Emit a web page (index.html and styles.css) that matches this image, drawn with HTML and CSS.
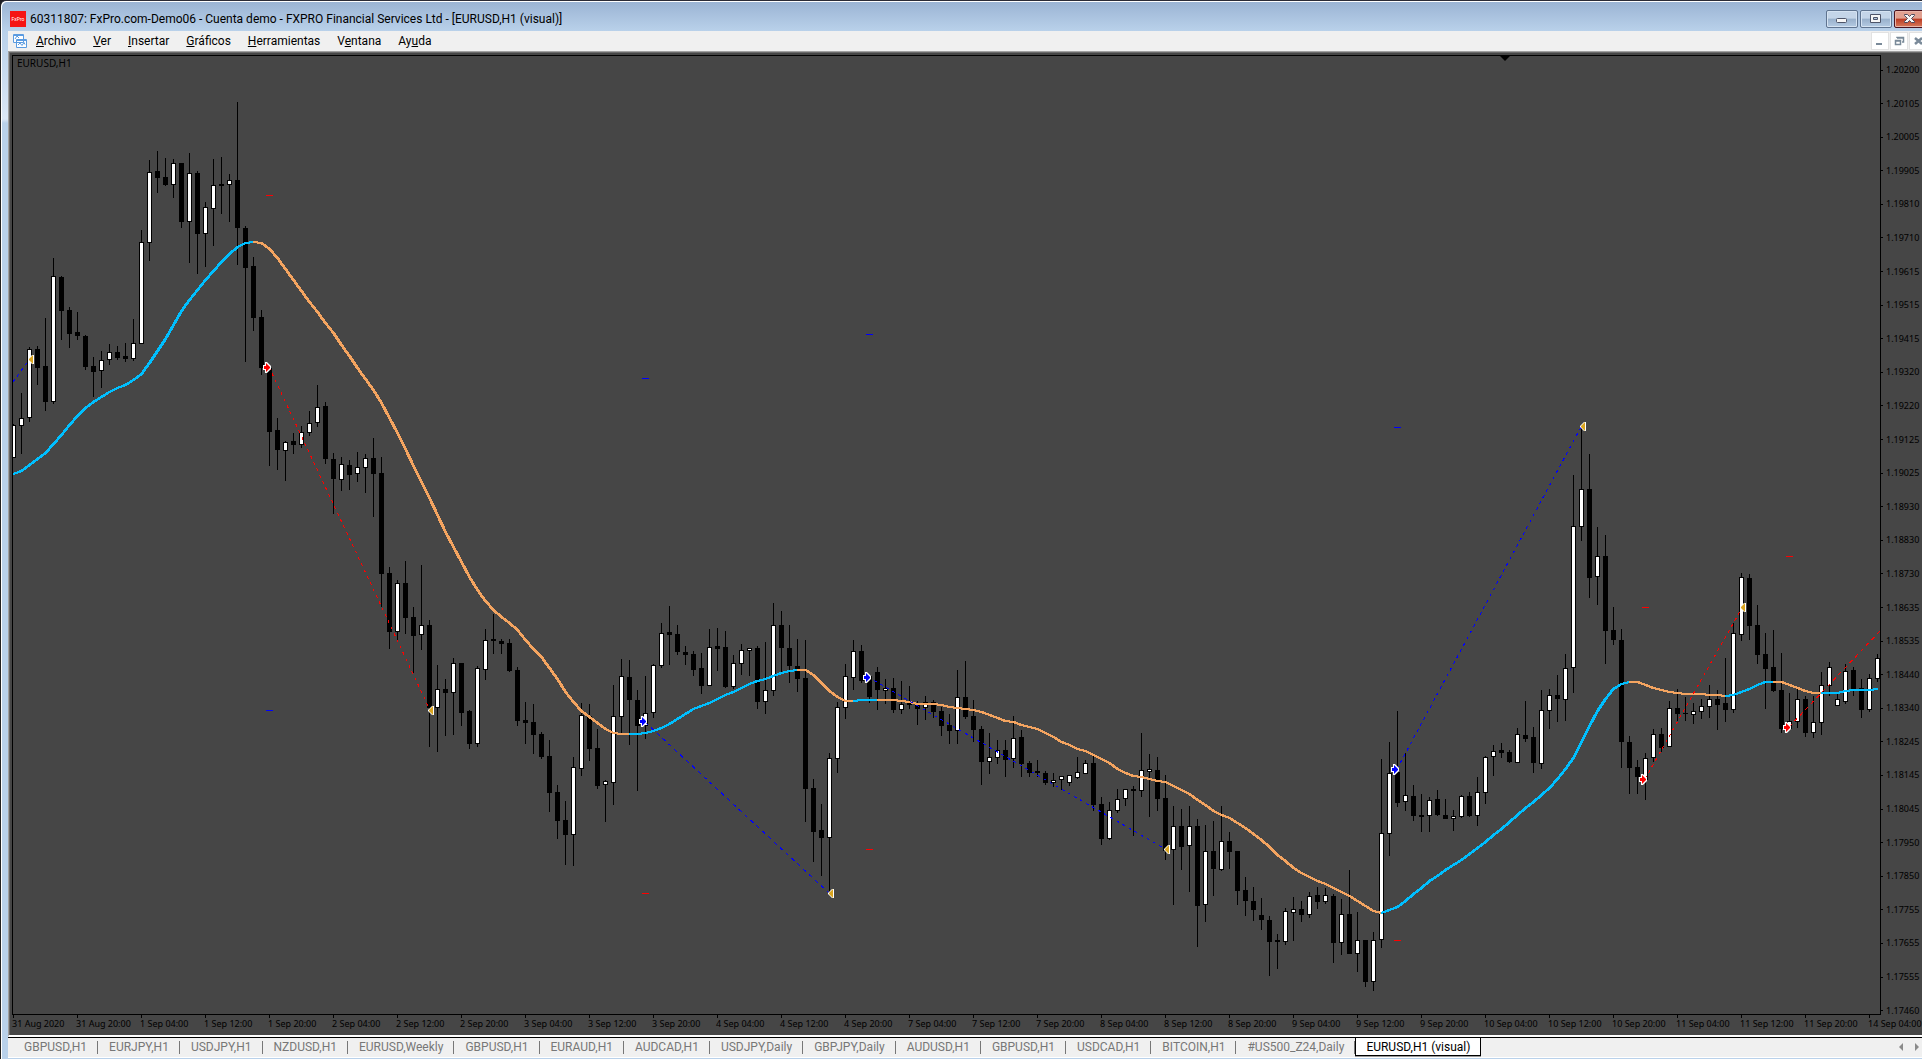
FILE: index.html
```html
<!DOCTYPE html>
<html lang="es">
<head>
<meta charset="utf-8">
<title>60311807: FxPro.com-Demo06 - Cuenta demo</title>
<link rel="stylesheet" href="styles.css">
</head>
<body>
<div class="window">
  <header class="titlebar">
    <span class="brand">FxPro</span>
    <h1 class="title">60311807: FxPro.com-Demo06 - Cuenta demo - FXPRO Financial Services Ltd - [EURUSD,H1 (visual)]</h1>
    <div class="caption">
      <button class="cap" aria-label="Minimizar">
        <svg width="30" height="16" viewBox="0 0 30 16"><rect x="9.500" y="7.500" width="10" height="4" rx="1" fill="#f6f6f6" stroke="#4d5468"/></svg>
      </button>
      <button class="cap" aria-label="Maximizar">
        <svg width="30" height="16" viewBox="0 0 30 16"><path fill-rule="evenodd" d="M9.500 3.500h10v8h-10zM12.500 6.500h4v2h-4z" fill="#f6f6f6" stroke="#4d5468"/></svg>
      </button>
      <button class="cap cap-close" aria-label="Cerrar">
        <svg width="30" height="16" viewBox="0 0 30 16"><path d="M9.500 3.500h3l2 2 2-2h3v1l-3 3 3 3v1h-3l-2-2-2 2h-3v-1l3-3-3-3z" fill="#f6f6f6" stroke="#4d4a5c"/></svg>
      </button>
    </div>
  </header>

  <div class="client">
    <nav class="menubar" aria-label="Menú">
      <svg class="mdi-icon" width="16" height="16" viewBox="0 0 16 16">
        <path d="M1.500 1.500h10v8h-10zM4.500 6.500h10v8h-10z" fill="#fff" stroke="#5b9be0"/>
        <path d="M2 2.500h9M5 7.500h9" stroke="#5b9be0"/>
        <path d="M3 6l2-3 2 2M6 12l2-2 2 2.500 2-3 1 2" fill="none" stroke="#5b9be0"/>
      </svg>
      <button class="menu"><u>A</u>rchivo</button>
      <button class="menu"><u>V</u>er</button>
      <button class="menu"><u>I</u>nsertar</button>
      <button class="menu"><u>G</u>ráficos</button>
      <button class="menu"><u>H</u>erramientas</button>
      <button class="menu">V<u>e</u>ntana</button>
      <button class="menu">Ay<u>u</u>da</button>
      <div class="mdi">
        <button class="mdi-btn" aria-label="Minimizar gráfico"><svg width="16" height="16" viewBox="0 0 16 16"><path d="M4 11h6" stroke="#7a8a99" stroke-width="2"/></svg></button>
        <button class="mdi-btn" aria-label="Restaurar gráfico"><svg width="16" height="16" viewBox="0 0 16 16"><path d="M6 5V4.500h6.500V9H11M6 5h6" fill="none" stroke="#7a8a99" stroke-width="1.500"/><path d="M4.500 7.500h5v4h-5zM4 8h6" fill="none" stroke="#7a8a99" stroke-width="1.500"/></svg></button>
        <button class="mdi-btn" aria-label="Cerrar gráfico"><svg width="16" height="16" viewBox="0 0 16 16"><path d="M5 5l7 6M12 5l-7 6" stroke="#7a8a99" stroke-width="2.500"/></svg></button>
      </div>
    </nav>

    <main class="chart">
      <div class="plot">
        <span class="symbol">EURUSD,H1</span>
        <svg id="plot" class="canvas" viewBox="13 56 1867 958" preserveAspectRatio="none" role="img" aria-label="EURUSD,H1"></svg>
      </div>
      <ol class="prices" id="prices"></ol>
      <ol class="times" id="times"></ol>
    </main>

    <nav class="tabs" aria-label="Gráficos abiertos">
      <button class="tab">GBPUSD,H1</button>
      <button class="tab">EURJPY,H1</button>
      <button class="tab">USDJPY,H1</button>
      <button class="tab">NZDUSD,H1</button>
      <button class="tab">EURUSD,Weekly</button>
      <button class="tab">GBPUSD,H1</button>
      <button class="tab">EURAUD,H1</button>
      <button class="tab">AUDCAD,H1</button>
      <button class="tab">USDJPY,Daily</button>
      <button class="tab">GBPJPY,Daily</button>
      <button class="tab">AUDUSD,H1</button>
      <button class="tab">GBPUSD,H1</button>
      <button class="tab">USDCAD,H1</button>
      <button class="tab">BITCOIN,H1</button>
      <button class="tab">#US500_Z24,Daily</button>
      <button class="tab tab-active">EURUSD,H1 (visual)</button>
      <div class="scroll">
        <button class="scroll-btn" aria-label="Anterior"><svg width="4" height="8" viewBox="0 0 4 8"><path d="M4 0v8L0 4z" fill="#8a8a8a"/></svg></button>
        <button class="scroll-btn" aria-label="Siguiente"><svg width="4" height="8" viewBox="0 0 4 8"><path d="M0 0v8l4-4z" fill="#8a8a8a"/></svg></button>
      </div>
    </nav>
  </div>
</div>
<script src="chart.js"></script>
</body>
</html>
```
FILE: styles.css
```css
* { box-sizing: border-box; }

html, body { height: 100%; margin: 0; }

body {
  overflow: hidden;
  background: #1c1c22;
  color: #000;
  font-family: Roboto, "Noto Sans", sans-serif;
  font-size: 12px;
}

button {
  margin: 0;
  padding: 0;
  border: 0;
  background: none;
  color: inherit;
  font: inherit;
}

svg { display: block; }

.window {
  display: flex;
  flex-direction: column;
  height: 100%;
  padding: 1px 0 1px 7px;
  border-left: 1px solid #222;
  border-top: 1px solid #2b2b36;
  border-top-left-radius: 6px;
  background: linear-gradient(#9ab3d3, #b9d1ea 30px, #dbe7f5 118px, #b9d1ea 122px);
  box-shadow: inset 1px 1px #fff;
}

.titlebar {
  display: flex;
  align-items: center;
  flex: 0 0 29px;
  padding: 5px 0 0 2px;
}

.brand {
  flex: none;
  width: 16px;
  height: 16px;
  background: #f51414;
  color: #fff;
  font-size: 5px;
  line-height: 16px;
  text-align: center;
}

.title {
  flex: 1;
  margin: 0 0 0 4px;
  font-size: 12px;
  font-weight: 400;
  line-height: 16px;
  white-space: nowrap;
}

.caption {
  display: flex;
  gap: 2px;
  margin-right: -4px;
}

.cap {
  width: 32px;
  height: 18px;
  border: 1px solid #5f7490;
  border-radius: 2px;
  background: linear-gradient(#c4d5e8 45%, #98b0cb 50%, #b4cbe3);
  box-shadow: inset 0 0 0 1px #d5e3f2;
}

.cap-close {
  border-color: #4a1420;
  background: linear-gradient(#e0a090 45%, #bb3a22 50%, #d67a5c);
  box-shadow: inset 0 0 0 1px #e8b4a8;
}

.client {
  display: flex;
  flex: 1;
  flex-direction: column;
  min-height: 0;
  background: #f0f0f0;
}

.menubar {
  display: flex;
  align-items: center;
  flex: 0 0 20px;
  gap: 17px;
  padding-left: 4px;
  line-height: 16px;
}

.mdi-icon { flex: none; margin-right: -9px; }

.mdi {
  display: flex;
  gap: 1px;
  margin: 0 -5px 0 auto;
}

.mdi-btn {
  width: 18px;
  height: 18px;
  border: 1px solid #e2e2e2;
  background: #fff;
}

.chart {
  display: grid;
  flex: 1;
  grid-template: minmax(0, 1fr) 20px / minmax(0, 1fr) 41px;
  min-height: 0;
  padding: 3px 0 0 2px;
  border-top: 1px solid #a0a0a0;
  border-left: 1px solid #a0a0a0;
  border-bottom: 2px solid #fff;
  background: #464646;
  box-shadow: inset 1px 1px #696969;
  color: #000;
  font-family: "Noto Sans", sans-serif;
  font-size: 9px;
}

.plot {
  position: relative;
  margin-left: 1px;
  border: 1px solid #000;
}

.canvas { width: 100%; height: 100%; }

.symbol {
  position: absolute;
  top: 1px;
  left: 4px;
  font-size: 10px;
  line-height: 12px;
}

.prices {
  display: flex;
  flex-direction: column;
  justify-content: space-between;
  margin: 8px 0 -3px;
  padding: 0;
  list-style: none;
}

.prices li {
  display: flex;
  align-items: center;
  height: 14px;
  line-height: 14px;
}

.prices li::before {
  width: 2px;
  height: 1px;
  margin-right: 3px;
  background: #000;
  content: "";
}

.times {
  display: flex;
  grid-column: 1 / -1;
  margin: 0;
  padding: 0 0 0 1px;
  overflow: hidden;
  list-style: none;
}

.times li {
  flex: 0 0 64px;
  line-height: 12px;
  white-space: nowrap;
}

.times li::before {
  display: block;
  width: 1px;
  height: 3px;
  margin-left: 1px;
  background: #000;
  content: "";
}

.tabs {
  display: flex;
  align-items: flex-start;
  flex: 0 0 21px;
  padding-left: 5px;
  border-top: 1px solid #000;
  border-bottom: 1px solid #fff;
  color: #777;
}

.tab {
  position: relative;
  height: 18px;
  padding: 0 11px;
  line-height: 18px;
  white-space: nowrap;
}

.tab:not(.tab-active)::after {
  position: absolute;
  top: 3px;
  right: 0;
  width: 1px;
  height: 13px;
  background: #777;
  content: "";
}

.tab-active {
  padding: 0 10px;
  border: 1px solid #000;
  border-top: 0;
  background: #fff;
  box-shadow: 0 1px #999;
  color: #000;
}

.scroll {
  display: flex;
  gap: 12px;
  margin: 5px 3px 0 auto;
}
```
FILE: chart.js
```js
// Candle rows: high, body top, body bottom, low, 1 = rising, moving average.
// Each block has its own origin (canvas y) and unit (canvas y per step).
const blocks = [
  { y: 90, unit: 1 / 3, rows: [
    [1001,1005,1103,1103,1,1152],[909,984,1007,1092,1,1144],[772,777,984,996,1,1126],[768,777,834,885,0,1108],
    [684,828,936,963,0,1090],[504,558,935,941,1,1063],[558,561,663,750,0,1034],[651,660,732,774,0,1005],
    [666,726,738,750,0,979],[735,738,831,840,0,954],[801,828,846,921,0,937],[783,810,843,894,1,922],
    [762,786,809,825,1,907],[768,786,804,810,0,895],[759,798,807,815,0,884],[687,759,807,812,1,871],
    [420,456,761,761,1,851],[210,246,459,513,1,820],[183,243,264,309,0,784],[204,261,285,288,0,746],
    [207,219,285,324,1,705],[219,219,396,414,0,664],[189,249,396,519,1,629],[243,249,432,552,0,599],
    [336,351,432,531,1,571],[207,285,357,468,1,544],[201,282,288,372,0,517],[252,270,285,396,1,492],
    [36,270,414,525,0,471],[408,414,534,816,0,459],[501,528,684,723,0,456],[660,681,834,855,0,460],
    [831,834,1026,1128,0,476],[984,1020,1080,1140,0,503],[1053,1056,1083,1173,1,537],[1029,1053,1064,1092,0,570],
    [1008,1026,1065,1074,1,603],[963,999,1029,1038,1,636],[885,951,999,1011,1,667],[936,948,1107,1122,0,699]] },
  { y: 350, unit: 0.338, rows: [
    [305,322,382,485,0,-50],[317,337,385,417,1,-16],[325,340,370,414,0,17],[302,346,367,391,1,52],
    [308,320,349,423,1,86],[260,320,367,494,0,117],[317,364,663,760,0,156],[642,660,834,885,0,201],
    [680,689,834,861,1,247],[624,689,793,840,0,293],[760,790,846,957,0,343],[636,814,843,888,1,390],
    [799,814,1059,1175,0,438],[932,1003,1059,1189,1,487],[973,1003,1015,1142,0,537],[911,926,1015,1139,1,583],
    [926,926,1074,1112,0,627],[1065,1068,1166,1180,0,672],[935,941,1166,1175,1,711],[825,858,947,976,1,744],
    [781,855,861,899,0,769],[855,861,870,899,0,789],[855,867,950,953,0,809],[938,947,1098,1112,0,829],
    [1041,1095,1104,1166,0,857],[1047,1101,1139,1195,0,884],[1130,1136,1204,1210,0,909],[1154,1201,1311,1367,0,940],
    [1287,1308,1393,1447,0,974],[1334,1390,1435,1524,0,1013]] },
  { y: 590, unit: 1 / 3, rows: [
    [501,531,735,828,1,336],[339,375,537,558,1,362],[342,378,477,513,0,382],[417,474,588,597,0,400],
    [570,573,585,696,1,416],[285,378,579,645,1,429],[207,258,381,432,1,432],[210,261,330,465,0,432],
    [300,330,408,603,0,432],[258,369,408,447,1,430],[222,225,369,384,1,424],[99,129,228,234,1,414],
    [48,126,135,225,0,403],[105,132,186,195,0,388],[168,186,195,225,0,373],[183,192,240,258,0,357],
    [189,234,288,312,0,349],[117,171,288,288,1,340],[114,168,177,243,0,328],[123,171,291,294,0,316],
    [195,219,291,297,1,307],[162,180,222,255,1,295],[174,174,183,258,1,283],[168,174,336,357,0,274],
    [156,300,336,372,1,268],[39,105,303,318,1,259],[63,105,174,252,0,250],[105,174,228,279,0,244],
    [147,228,267,306,0,240],[150,264,597,696,0,240],[567,594,726,816,0,256],[642,720,744,858,0,279],
    [489,504,744,906,1,303],[336,351,507,549,1,321],[222,258,354,387,1,332],[150,183,264,300,1,333],
    [165,183,273,279,0,330],[255,258,321,339,0,330],[231,246,300,360,0,330],[267,294,303,342,1,330]] },
  { y: 620, unit: 1 / 3, rows: [
    [174,204,270,279,0,240],[183,252,270,282,1,244],[198,249,255,267,0,247],[243,252,267,315,0,251],
    [228,246,264,300,1,252],[240,246,276,294,0,253],[261,273,318,348,0,256],[282,315,333,372,0,262],
    [150,231,333,372,1,265],[123,231,291,297,0,268],[240,288,330,366,0,271],[318,327,426,495,0,277],
    [339,411,426,462,1,284],[360,390,414,432,1,293],[360,390,420,471,0,302],[288,354,417,444,1,307],
    [330,351,432,471,0,314],[423,429,459,471,0,322],[420,453,459,471,0,328],[453,459,489,495,0,339],
    [459,480,489,501,1,352],[468,468,480,510,1,365],[465,465,489,498,1,376],[411,456,474,477,1,386],
    [420,429,462,462,1,394],[408,429,555,573,0,404],[531,552,657,675,0,418],[546,570,657,660,1,430],
    [507,537,573,579,1,446],[507,507,537,558,1,458],[498,507,513,648,0,467],[339,450,513,531,1,472],
    [402,447,456,591,1,477],[411,450,537,573,0,482],[465,534,693,720,0,487]] },
  { y: 720, unit: 1 / 3, rows: [
    [258,318,390,555,1,199],[267,318,381,450,0,211],[258,318,378,516,1,223],[297,318,558,681,0,239],
    [315,393,555,606,1,254],[303,393,447,528,0,272],[258,363,450,453,1,284],[336,363,396,447,0,295],
    [393,393,513,555,0,309],[471,510,543,588,0,324],[501,543,570,603,0,342],[534,585,600,630,0,361],
    [588,600,666,768,0,382],[642,660,666,747,0,405],[564,573,666,675,1,424],[531,567,579,663,1,443],
    [543,567,585,606,0,460],[516,528,585,594,1,472],[501,525,546,567,0,483],[504,525,546,552,1,493],
    [522,528,669,729,0,505],[537,582,669,705,1,517],[450,582,702,702,0,529],[576,660,702,756,1,544],
    [660,660,786,801,0,559],[636,660,786,813,1,574],[117,339,660,684,1,579],[66,159,342,408,1,571],
    [-27,156,249,261,0,560],[99,225,246,273,1,542],[195,228,288,303,0,523],[222,285,291,336,0,503],
    [231,240,288,336,1,484],[210,237,285,288,0,468],[237,285,297,297,0,451],[270,288,297,333,1,434],
    [225,228,291,294,1,419]] },
  { y: 400, unit: 1 / 3, rows: [
    [1176,1188,1248,1251,0,1363],[1131,1176,1248,1278,1,1344],[1068,1071,1179,1212,1,1325],[1035,1053,1071,1128,1,1306],
    [1029,1050,1059,1074,0,1286],[1050,1056,1086,1089,0,1266],[984,1002,1089,1089,1,1246],[903,1005,1017,1026,0,1225],
    [981,1011,1089,1119,0,1205],[870,930,1092,1107,1,1184],[867,885,933,987,1,1163],[825,885,897,966,0,1138],
    [762,804,900,963,1,1108],[225,378,804,879,1,1073],[84,267,381,423,1,1027],[162,267,534,594,0,979],
    [381,468,531,615,1,933],[405,468,693,792,0,897],[621,690,720,735,0,868],[687,720,1026,1104,0,851],
    [1008,1026,1104,1182,0,846],[1080,1101,1131,1182,0,847],[1059,1074,1140,1200,1,856],[987,1002,1074,1086,1,863],
    [984,1002,1044,1056,0,871],[903,924,1041,1041,1,875],[867,924,942,963,0,878],[891,939,942,963,0,881]] },
  { y: 540, unit: 1 / 3, rows: [
    [489,513,525,552,1,462],[477,498,516,537,1,463],[435,477,501,534,1,465],[450,477,495,570,0,466],
    [354,489,510,546,0,468],[249,279,510,519,1,466],[99,111,285,303,1,457],[102,114,258,300,0,446],
    [195,255,345,372,0,436],[279,342,387,507,0,427],[270,381,453,456,0,426],[339,450,567,579,0,427],
    [459,543,567,570,1,436],[441,477,546,564,1,443],[468,477,579,591,0,452],[468,546,579,594,1,458],
    [396,435,549,585,1,459],[366,381,438,468,1,459],[459,477,498,498,1,459],[372,393,486,492,1,454],
    [381,390,447,468,0,451],[417,444,510,534,0,450],[402,414,510,516,1,449],[342,354,417,426,1,447]] },
];

const FIRST_X = 13;
const STEP = 8;
const BLUE = '#00bfff';
const ORANGE = '#f4a460';
const candles = blocks.flatMap(b => b.rows.map(r => ({
  high: Math.round(b.y + r[0] * b.unit),
  top: Math.round(b.y + r[1] * b.unit),
  bottom: Math.round(b.y + r[2] * b.unit),
  low: Math.round(b.y + r[3] * b.unit),
  up: r[4] === 1,
  ma: Math.round(b.y + r[5] * b.unit),
})));
const xOf = i => FIRST_X + i * STEP;

let out = '';
candles.forEach((c, i) => {
  const x = xOf(i);
  const h = Math.max(1, c.bottom - c.top);
  out += `<rect x="${x}" y="${c.high}" width="1" height="${Math.max(1, c.low - c.high)}"/>`;
  out += `<rect x="${x - 2}" y="${c.top}" width="5" height="${h}"/>`;
  if (c.up) out += `<rect x="${x - 1}" y="${c.top + 1}" width="3" height="${Math.max(1, h - 2)}" fill="#fff"/>`;
});

// The average changes colour with its slope: [first candle, last candle, colour].
// It is drawn twice, one unit apart, so that steep stretches keep their weight.
[[0, 30, BLUE], [30, 77, ORANGE], [77, 98, BLUE], [98, 105, ORANGE], [105, 108, BLUE], [108, 171, ORANGE],
 [171, 202, BLUE], [202, 214, ORANGE], [214, 220, BLUE], [220, 226, ORANGE], [226, 233, BLUE]]
  .forEach(([a, b, colour]) => {
    [0, 1].forEach(shift => {
      const points = candles.slice(a, b + 1).map((c, i) => `${xOf(a + i) + shift},${c.ma}`).join(' ');
      out += `<polyline points="${points}" fill="none" stroke="${colour}" stroke-width="2" shape-rendering="crispEdges"/>`;
    });
  });

// Trades: entry to exit.
[[13, 382, 29, 360, 'blue', '3 4'], [269, 367, 430, 710, 'red', '3 4'], [645, 722, 829, 893, 'blue', '4 4'],
 [868, 677, 1165, 849, 'blue', '3 4'], [1397, 769, 1581, 427, 'blue', '3 4'], [1645, 779, 1742, 608, 'red', '3 4'],
 [1789, 727, 1880, 631, 'red', '4 4']]
  .forEach(([x1, y1, x2, y2, colour, dash]) => {
    out += `<line x1="${x1}" y1="${y1}" x2="${x2}" y2="${y2}" stroke="${colour}" stroke-dasharray="${dash}" shape-rendering="crispEdges"/>`;
  });

// Stop and target levels.
[[266, 195, 'red'], [266, 710, 'blue'], [642, 378, 'blue'], [642, 893, 'red'], [866, 334, 'blue'],
 [866, 849, 'red'], [1394, 427, 'blue'], [1394, 940, 'red'], [1642, 607, 'red'], [1786, 556, 'red']]
  .forEach(([x, y, colour]) => { out += `<rect x="${x}" y="${y}" width="7" height="1" fill="${colour}"/>`; });

[[266, 367, 'red'], [642, 721, 'blue'], [866, 677, 'blue'], [1394, 769, 'blue'], [1642, 779, 'red'], [1786, 727, 'red']]
  .forEach(([x, y, colour]) => {
    out += `<path transform="translate(${x} ${y})" d="M-3-2h2v-3h2l4 4v3l-4 4h-2v-3h-2z" fill="#fff"/>`;
    out += `<path transform="translate(${x} ${y})" d="M-2-1h2v-3l4 4v1l-4 4v-3h-2z" fill="${colour}"/>`;
  });

[[31, 359], [431, 710], [831, 893], [1167, 849], [1583, 426], [1743, 607]]
  .forEach(([x, y]) => {
    out += `<path transform="translate(${x} ${y})" d="M-3 0l4-4h2v9h-2l-4-4z" fill="#fff"/>`;
    out += `<path transform="translate(${x} ${y})" d="M-2 0l4-4v9l-4-4z" fill="#daa520"/>`;
  });

out += '<path d="M1500 56h10l-5 5z"/>';
document.getElementById('plot').innerHTML = out;

const prices = '1.20200 1.20105 1.20005 1.19905 1.19810 1.19710 1.19615 1.19515 1.19415 1.19320 1.19220 1.19125 1.19025 1.18930 1.18830 1.18730 1.18635 1.18535 1.18440 1.18340 1.18245 1.18145 1.18045 1.17950 1.17850 1.17755 1.17655 1.17555 1.17460';
document.getElementById('prices').innerHTML = prices.split(' ').map(p => `<li>${p}</li>`).join('');

const times = ['31 Aug 2020', '31 Aug 20:00'];
['1', '2', '3', '4', '7', '8', '9', '10', '11'].forEach(day => {
  ['04:00', '12:00', '20:00'].forEach(hour => times.push(`${day} Sep ${hour}`));
});
times.push('14 Sep 04:00');
document.getElementById('times').innerHTML = times.map(t => `<li>${t}</li>`).join('');
```
